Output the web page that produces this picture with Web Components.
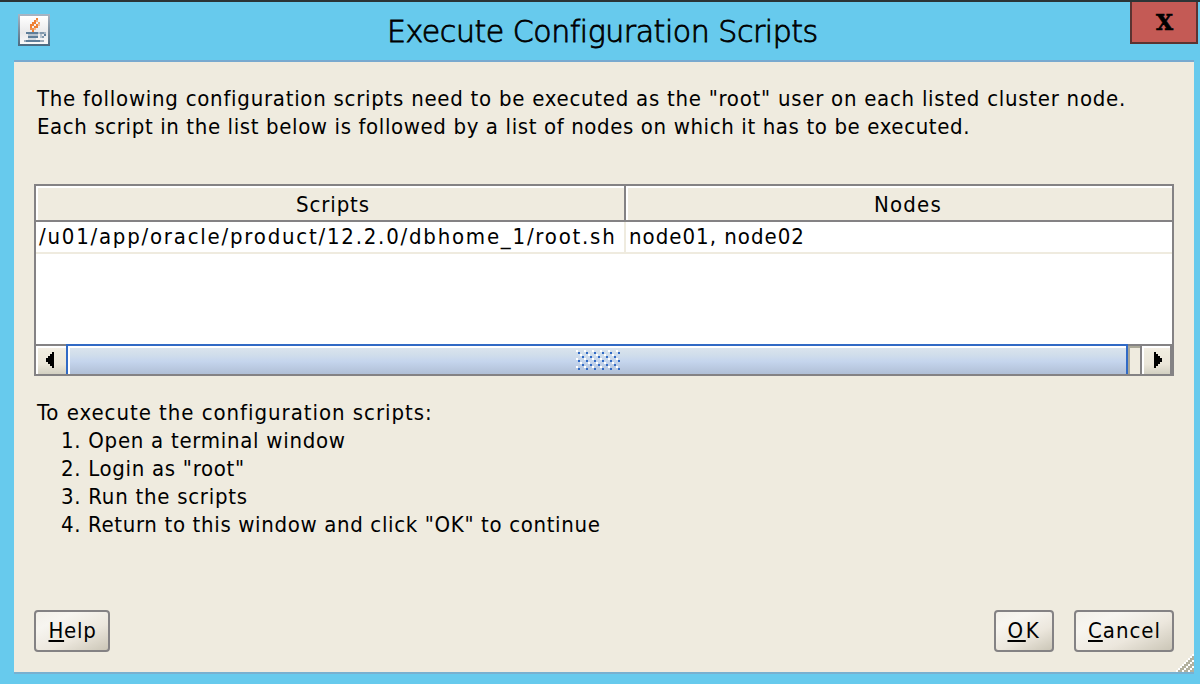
<!DOCTYPE html>
<html lang="en"><head><meta charset="utf-8"><title>Execute Configuration Scripts</title>
<style>html,body{margin:0;height:100%;background:#67caed}body{overflow:hidden}</style></head>
<body>
<install-dialog>
  <dialog-titlebar slot="title"><fit-text width="431" class="t">Execute Configuration Scripts</fit-text></dialog-titlebar>
  <dialog-message slot="intro">
    <fit-text width="1090">The following configuration scripts need to be executed as the "root" user on each listed cluster node.</fit-text>
    <fit-text width="934">Each script in the list below is followed by a list of nodes on which it has to be executed.</fit-text>
  </dialog-message>
  <script-table slot="table">
    <fit-text slot="h1" width="74">Scripts</fit-text>
    <fit-text slot="h2" width="68">Nodes</fit-text>
    <fit-text slot="c1" width="578">/u01/app/oracle/product/12.2.0/dbhome_1/root.sh</fit-text>
    <fit-text slot="c2" width="176">node01, node02</fit-text>
    <scroll-bar slot="bar"></scroll-bar>
  </script-table>
  <dialog-message slot="steps">
    <fit-text width="396">To execute the configuration scripts:</fit-text>
    <fit-text class="i" width="285">1. Open a terminal window</fit-text>
    <fit-text class="i" width="184">2. Login as "root"</fit-text>
    <fit-text class="i" width="187">3. Run the scripts</fit-text>
    <fit-text class="i" width="540">4. Return to this window and click "OK" to continue</fit-text>
  </dialog-message>
  <push-button slot="help" style="width:76px"><fit-text width="48"><u>H</u>elp</fit-text></push-button>
  <push-button slot="ok" style="width:60px"><fit-text width="34"><u>O</u>K</fit-text></push-button>
  <push-button slot="cancel" style="width:100px"><fit-text width="73"><u>C</u>ancel</fit-text></push-button>
</install-dialog>
<script>
const define = (name, html, init) => customElements.define(name, class extends HTMLElement {
  constructor() {
    super();
    this.attachShadow({ mode: 'open' }).innerHTML = html;
  }
  connectedCallback() { if (init) init(this, this.shadowRoot); }
});
const cells = (list, fill) => list.map(([x, y, w = 1, h = 1, f = fill]) => `<rect x="${x}" y="${y}" width="${w}" height="${h}" fill="${f}"/>`).join('');

define('install-dialog', `<style>
:host{display:flex;flex-direction:column;width:1200px;height:684px;box-sizing:border-box;border-top:2px solid #2b3436;background:#67caed;color:#000;font:22px/28px "DejaVu Sans Condensed","DejaVu Sans",sans-serif}
.pane{position:relative;margin:0 6px 0 14px;border-top:2px solid #78a9cf;border-bottom:2px solid #78b0d0;background:#efebdf;padding:22px 20px 0 20px;display:flex;flex-direction:column;height:588px}
.intro{box-sizing:border-box;height:100px;padding-top:1px}.table{height:192px}.steps{margin-top:23px;height:211px}
.buttons{display:flex;gap:20px}.grow{flex:1}
svg{position:absolute;right:0;bottom:0}
</style><slot name="title"></slot><div class="pane"><div class="intro"><slot name="intro"></slot></div><div class="table"><slot name="table"></slot></div><div class="steps"><slot name="steps"></slot></div><div class="buttons"><slot name="help"></slot><div class="grow"></div><slot name="ok"></slot><slot name="cancel"></slot></div><svg width="18" height="18" viewBox="0 0 9 9" shape-rendering="crispEdges"></svg></div>`,
(el, root) => {
  const c = [];
  for (let y = 0; y < 9; y++) for (let x = 0; x < 9; x++) {
    const n = x + y - 8;
    if (n >= 0) c.push([x, y, 1, 1, n % 3 ? '#b3b19e' : '#fff']);
  }
  root.querySelector('svg').innerHTML = cells(c);
});

define('dialog-titlebar', `<style>
:host{display:grid;grid-template-columns:50px 1fr 70px;height:58px;flex:none;font:30px/36px "DejaVu Sans Light","DejaVu Sans",sans-serif;-webkit-text-stroke:.8px #000}
svg{margin:12px 0 0 18px}.title{margin:12px 0 0 337px}
.close{width:64px;height:40px;border:2px solid #5b3331;border-top:0;background:#c45a55;display:flex;justify-content:center;font:bold 22px/40px "DejaVu Serif",serif;-webkit-text-stroke:.6px #000;text-indent:1px}
</style><svg width="32" height="32" viewBox="0 0 16 16" shape-rendering="crispEdges"><defs><linearGradient id="b" x2="0" y2="1"><stop stop-color="#a9b6c4"/><stop offset="1" stop-color="#4b6a80"/></linearGradient><linearGradient id="w" x2="0" y2="1"><stop stop-color="#fff"/><stop offset=".6" stop-color="#e9e9ea"/><stop offset="1" stop-color="#fafafa"/></linearGradient></defs><rect width="16" height="16" fill="url(#b)"/><rect x="1" y="1" width="14" height="14" fill="url(#w)"/><g id="cup"></g></svg><div class="title"><slot></slot></div><div class="close">X</div>`,
(el, root) => {
  root.querySelector('#cup').innerHTML =
    cells([[9,2],[8,3],[9,3,1,1,'#f5b585'],[7,4,2],[10,4,1,1,'#f4a86c'],[6,5,2],[9,5],[10,5,1,1,'#f5c39c'],[6,6],[8,6,2],[6,7,2,1,'#f0924e'],[8,7,1,1,'#f5b585'],[7,8]], '#ee8033') +
    cells([[4,9,6],[11,9,2,1,'#8298ac'],[5,10,5,1,'#b5c2ce'],[10,9,1,1,'#b5c2ce'],[13,9,1,1,'#a7b6c4'],[13,10],[11,10,1,1,'#b5c2ce'],[5,11,5],[12,11,1,1,'#8298ac'],[11,11,1,1,'#b5c2ce'],[3,13,1,1,'#9cacba'],[4,13,7],[11,13,2,1,'#9cacba'],[5,12,4,1,'#d5dce2']], '#5e7e99');
});

define('dialog-message', `<style>:host{display:flex;flex-direction:column;padding-left:3px}::slotted(.i){margin-left:24px}</style><slot></slot>`);

define('fit-text', `<style>:host{display:block;white-space:pre}span{display:inline-block}::slotted(u){text-decoration-thickness:2px;text-underline-offset:2px;text-decoration-skip-ink:none}</style><span><slot></slot></span>`,
(el, root) => {
  const span = root.querySelector('span'), want = +el.getAttribute('width');
  el.style.width = want + 'px';
  el.style.letterSpacing = '0.01px';
  el.style.letterSpacing = (want - span.getBoundingClientRect().width) / el.textContent.length + 'px';
});

define('script-table', `<style>
:host{display:grid;box-sizing:border-box;height:192px;border:2px solid #848284;background:#fff;grid-template:36px 32px 90px 30px / 590px 1fr}
.h{box-sizing:border-box;display:flex;justify-content:center;border-bottom:2px solid #848284;background:#efebdf;box-shadow:inset 2px 2px #fff;padding:5px 0 0 18px}
.a{border-right:2px solid #848284}.h.a{padding-left:6px}
.c{box-sizing:border-box;border-bottom:2px solid #efebdf;padding-left:3px;padding-top:1px}
.c.a{border-right-color:#efebdf}
.empty,.bar{grid-column:1/3}
</style><div class="h a"><slot name="h1"></slot></div><div class="h"><slot name="h2"></slot></div><div class="c a"><slot name="c1"></slot></div><div class="c"><slot name="c2"></slot></div><div class="empty"></div><div class="bar"><slot name="bar"></slot></div>`);

define('scroll-bar', `<style>
:host{display:grid;grid-template-columns:30px 1062px 12px 1fr;height:30px}
div{box-sizing:border-box;border-top:2px solid #848284;height:30px}
.btn{background:linear-gradient(#f7efe6,#efecdf 20%,#ebe6d9 65%,#d3d0c2);box-shadow:inset 2px 2px #fff}
.r{border-left:2px solid #848284;border-right:2px solid #848284}
.thumb{border:2px solid #316ac5;border-bottom:0;box-shadow:inset 2px 2px #fff;background:linear-gradient(#dce5ee,#d1deeb 30%,#c5d5ed 55%,#b0bfd6);display:flex;justify-content:center;padding-left:2px}
.track{background:#efebdf;box-shadow:inset 2px 2px #aaa898}
svg{display:block}.thumb svg{margin-top:4px}.l svg{margin:6px 0 0 10px}.r svg{margin:6px 0 0 12px}
</style><div class="btn l"><svg width="8" height="16" viewBox="0 0 4 8" shape-rendering="crispEdges"><path d="M4 0V8H3V7H2V6H1V5H0V3H1V2H2V1H3V0Z"/></svg></div><div class="thumb"><svg width="44" height="20" shape-rendering="crispEdges"><defs><pattern id="p" width="8" height="8" patternUnits="userSpaceOnUse"><path fill="#fff" d="M0 0h2v2H0zM4 4h2v2H4z"/><path fill="#316ac5" d="M2 2h2v2H2zM6 6h2v2H6z"/></pattern></defs><rect width="44" height="20" fill="url(#p)"/></svg></div><div class="track"></div><div class="btn r"><svg width="8" height="16" viewBox="0 0 4 8" shape-rendering="crispEdges"><path d="M0 0V8H1V7H2V6H3V5H4V3H3V2H2V1H1V0Z"/></svg></div>`);

define('push-button', `<style>:host{display:flex;justify-content:center;box-sizing:border-box;height:42px;border:2px solid #848284;border-radius:4px;background:linear-gradient(155deg,#f3f0e9,#f7f5f0 25%,#ece7dd 62%,#cbc6b7);padding:5px 0 0 1px}</style><slot></slot>`);
</script>
</body></html>
